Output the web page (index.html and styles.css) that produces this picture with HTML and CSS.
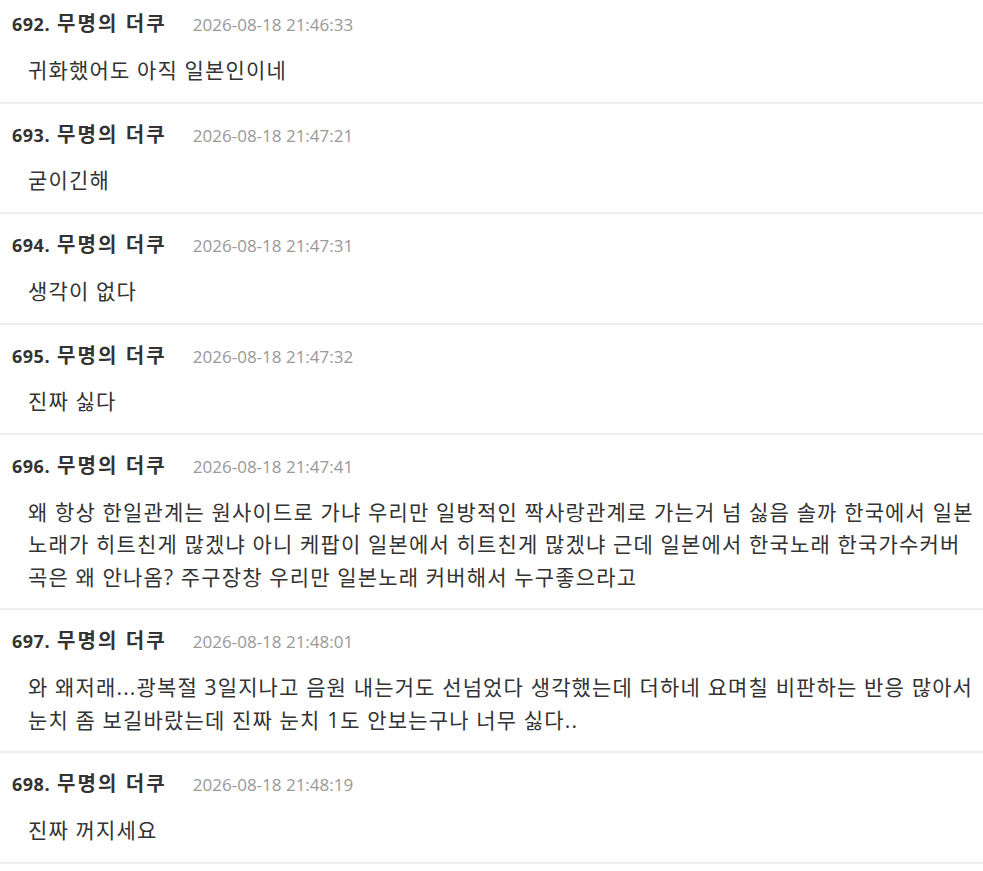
FILE: index.html
```html
<!DOCTYPE html>
<html lang="ko">
<head>
    <meta charset="UTF-8">
    <title>댓글</title>
    <link rel="stylesheet" href="styles.css">
</head>
<body>
    <div class="comment-list">
        <div class="comment">
            <div class="comment-head"><span class="comment-num">692.</span><span class="comment-name">무명의 더쿠</span><span class="comment-date">2026-08-18 21:46:33</span></div>
            <div class="comment-body">귀화했어도 아직 일본인이네</div>
        </div>
        <div class="comment">
            <div class="comment-head"><span class="comment-num">693.</span><span class="comment-name">무명의 더쿠</span><span class="comment-date">2026-08-18 21:47:21</span></div>
            <div class="comment-body">굳이긴해</div>
        </div>
        <div class="comment">
            <div class="comment-head"><span class="comment-num">694.</span><span class="comment-name">무명의 더쿠</span><span class="comment-date">2026-08-18 21:47:31</span></div>
            <div class="comment-body">생각이 없다</div>
        </div>
        <div class="comment">
            <div class="comment-head"><span class="comment-num">695.</span><span class="comment-name">무명의 더쿠</span><span class="comment-date">2026-08-18 21:47:32</span></div>
            <div class="comment-body">진짜 싫다</div>
        </div>
        <div class="comment">
            <div class="comment-head"><span class="comment-num">696.</span><span class="comment-name">무명의 더쿠</span><span class="comment-date">2026-08-18 21:47:41</span></div>
            <div class="comment-body">왜 항상 한일관계는 원사이드로 가냐 우리만 일방적인 짝사랑관계로 가는거 넘 싫음 솔까 한국에서 일본노래가 히트친게 많겠냐 아니 케팝이 일본에서 히트친게 많겠냐 근데 일본에서 한국노래 한국가수커버곡은 왜 안나옴? 주구장창 우리만 일본노래 커버해서 누구좋으라고</div>
        </div>
        <div class="comment">
            <div class="comment-head"><span class="comment-num">697.</span><span class="comment-name">무명의 더쿠</span><span class="comment-date">2026-08-18 21:48:01</span></div>
            <div class="comment-body">와 왜저래...광복절 3일지나고 음원 내는거도 선넘었다 생각했는데 더하네 요며칠 비판하는 반응 많아서 눈치 좀 보길바랐는데 진짜 눈치 1도 안보는구나 너무 싫다..</div>
        </div>
        <div class="comment">
            <div class="comment-head"><span class="comment-num">698.</span><span class="comment-name">무명의 더쿠</span><span class="comment-date">2026-08-18 21:48:19</span></div>
            <div class="comment-body">진짜 꺼지세요</div>
        </div>
    </div>
</body>
</html>
```

FILE: styles.css
```css
body {
    margin: 0;
    background: #fff;
    color: #333;
    font-family: "Open Sans", "Noto Sans CJK KR", sans-serif;
    overflow: hidden;
}
/* list is scrolled a few px, first item cut at the top */
.comment-list {
    display: flex;
    flex-direction: column;
    margin-top: -7px;
}
.comment {
    padding: 16px 4px 15.3px 12px;
    border-bottom: 2px solid #eee;
}
.comment-head {
    display: flex;
    align-items: baseline;
    line-height: 29px;
}
.comment-num {
    font-size: 18px;
    font-weight: bold;
    letter-spacing: 0.5px;
    color: #333;
}
.comment-name {
    margin-left: 7px;
    font-size: 20px;
    font-weight: bold;
    letter-spacing: 2.1px;
    color: #333;
}
.comment-date {
    margin-left: 26px;
    font-size: 17px;
    color: #999;
}
.comment-body {
    margin-top: 14.8px;
    padding-left: 16px;
    font-size: 21px;
    letter-spacing: 1.15px;
    line-height: 32.4px;
    color: #333;
}
```
